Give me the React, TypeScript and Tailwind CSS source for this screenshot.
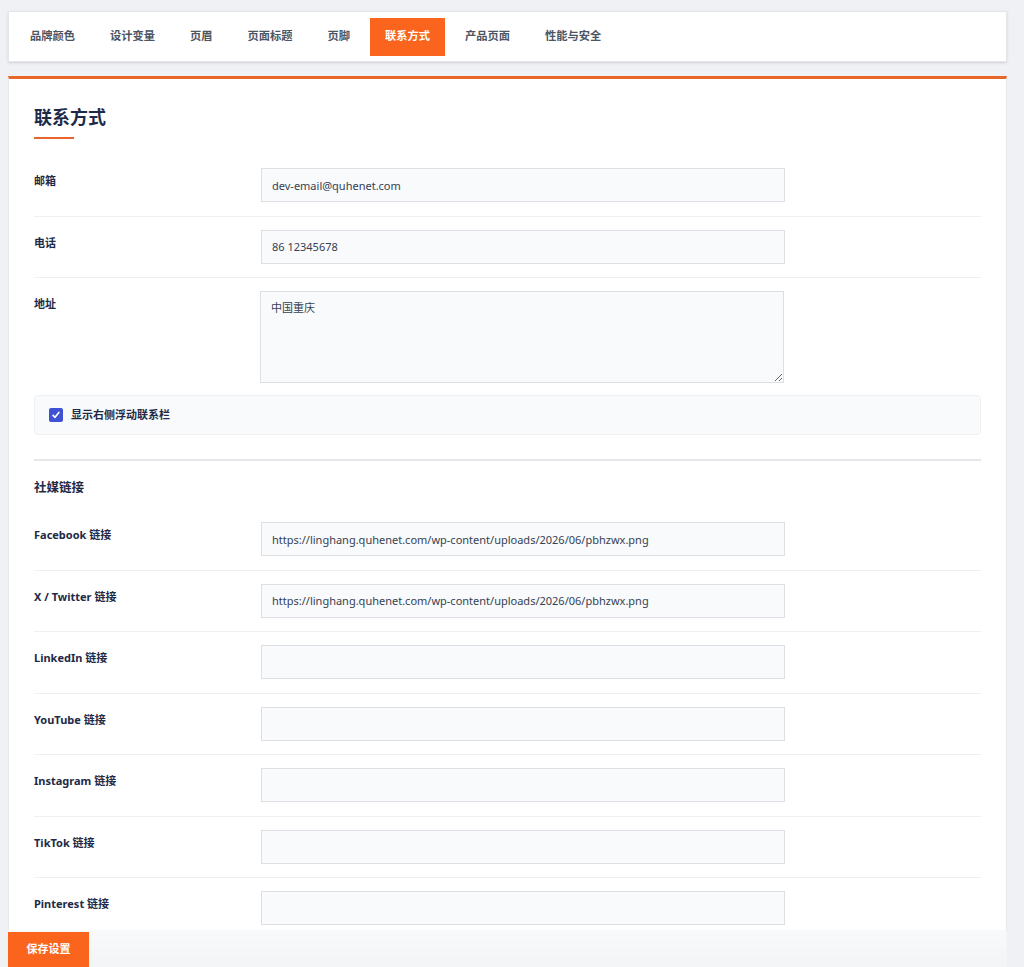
const tabs = ["品牌颜色", "设计变量", "页眉", "页面标题", "页脚", "联系方式", "产品页面", "性能与安全"];

const socials = [
  { label: "Facebook 链接", value: "https://linghang.quhenet.com/wp-content/uploads/2026/06/pbhzwx.png" },
  { label: "X / Twitter 链接", value: "https://linghang.quhenet.com/wp-content/uploads/2026/06/pbhzwx.png" },
  { label: "LinkedIn 链接", value: "" },
  { label: "YouTube 链接", value: "" },
  { label: "Instagram 链接", value: "" },
  { label: "TikTok 链接", value: "" },
  { label: "Pinterest 链接", value: "" },
];

const Field = ({ label, value, last }: { label: string; value: string; last?: boolean }) => (
  <div className={`flex items-start py-[13.25px] ${last ? "" : "border-b border-[#eef0f3]"}`}>
    <label className="w-[227px] shrink-0 pt-[6px] text-[11px] leading-[14px] font-bold text-[#1e2a47]">{label}</label>
    <input
      type="text"
      defaultValue={value}
      className="w-[524px] h-[34px] px-[10px] bg-[#f8fafc] border border-[#dcdfe4] text-[11px] text-[#374151] outline-none"
    />
  </div>
);

export default function App() {
  return (
    <div className="h-[967px] overflow-hidden bg-[#f0f1f4] pt-[11px] pl-2 pr-[17px] font-['Noto_Sans','Noto_Sans_CJK_SC',sans-serif]">
      <nav className="h-[51px] bg-white border border-[#e4e6ea] shadow-sm flex items-center gap-[5px] px-[6px]">
        {tabs.map((t) => (
          <a
            key={t}
            href="#"
            className={`h-[38px] px-[15px] flex items-center text-[11.25px] font-bold ${
              t === "联系方式" ? "bg-[#fa641c] text-white" : "text-[#4b5563]"
            }`}
          >
            {t}
          </a>
        ))}
      </nav>

      <main className="mt-[14px] bg-white border border-[#e6e8eb] border-t-[3px] border-t-[#e9662a] px-[25px] pt-[26px] pb-[60px]">
        <h2 className="text-[18px] leading-[24px] font-bold text-[#1e2a47]">联系方式</h2>
        <div className="mt-[8px] w-[40px] h-[2px] bg-[#e9662a]" />

        <div className="mt-[16px]">
          <Field label="邮箱" value="dev-email@quhenet.com" />
          <Field label="电话" value="86 12345678" />
          <div className="flex items-start pt-[13px]">
            <label className="w-[226px] shrink-0 pt-[6px] text-[11px] leading-[14px] font-bold text-[#1e2a47]">地址</label>
            <textarea
              defaultValue="中国重庆"
              className="w-[524px] h-[92px] px-[10px] py-[8px] bg-[#f8fafc] border border-[#dcdfe4] text-[11px] text-[#374151] outline-none"
            />
          </div>
          <div className="mt-[12px] h-[40px] bg-[#f9fafb] border border-[#eff1f3] rounded-sm flex items-center px-[14px] gap-[8px]">
            <span className="w-[14px] h-[14px] rounded-[2px] bg-[#3f51d4] flex items-center justify-center">
              <svg viewBox="0 0 12 12" className="w-[10px] h-[10px]" fill="none" stroke="white" strokeWidth="2" strokeLinecap="round" strokeLinejoin="round">
                <path d="M2.5 6.5l2.3 2.3L9.5 3" />
              </svg>
            </span>
            <span className="text-[11px] font-bold text-[#1e2a47]">显示右侧浮动联系栏</span>
          </div>
        </div>

        <div className="mt-[24px] border-t-2 border-[#e5e7eb] pt-[18px]">
          <h3 className="text-[12.5px] leading-[18px] font-bold text-[#1e2a47]">社媒链接</h3>
          <div className="mt-[12px]">
            {socials.map((s, i) => (
              <Field key={s.label} label={s.label} value={s.value} last={i === socials.length - 1} />
            ))}
          </div>
        </div>
      </main>

      <div className="fixed bottom-0 left-2 right-[17px] h-[37px] bg-gradient-to-b from-[#f7f8fa]/80 to-[#f3f4f6]">
        <button className="absolute left-0 bottom-0 w-[81px] h-[35px] bg-[#fa641c] text-white text-[11px] font-bold">
          保存设置
        </button>
      </div>
    </div>
  );
}
